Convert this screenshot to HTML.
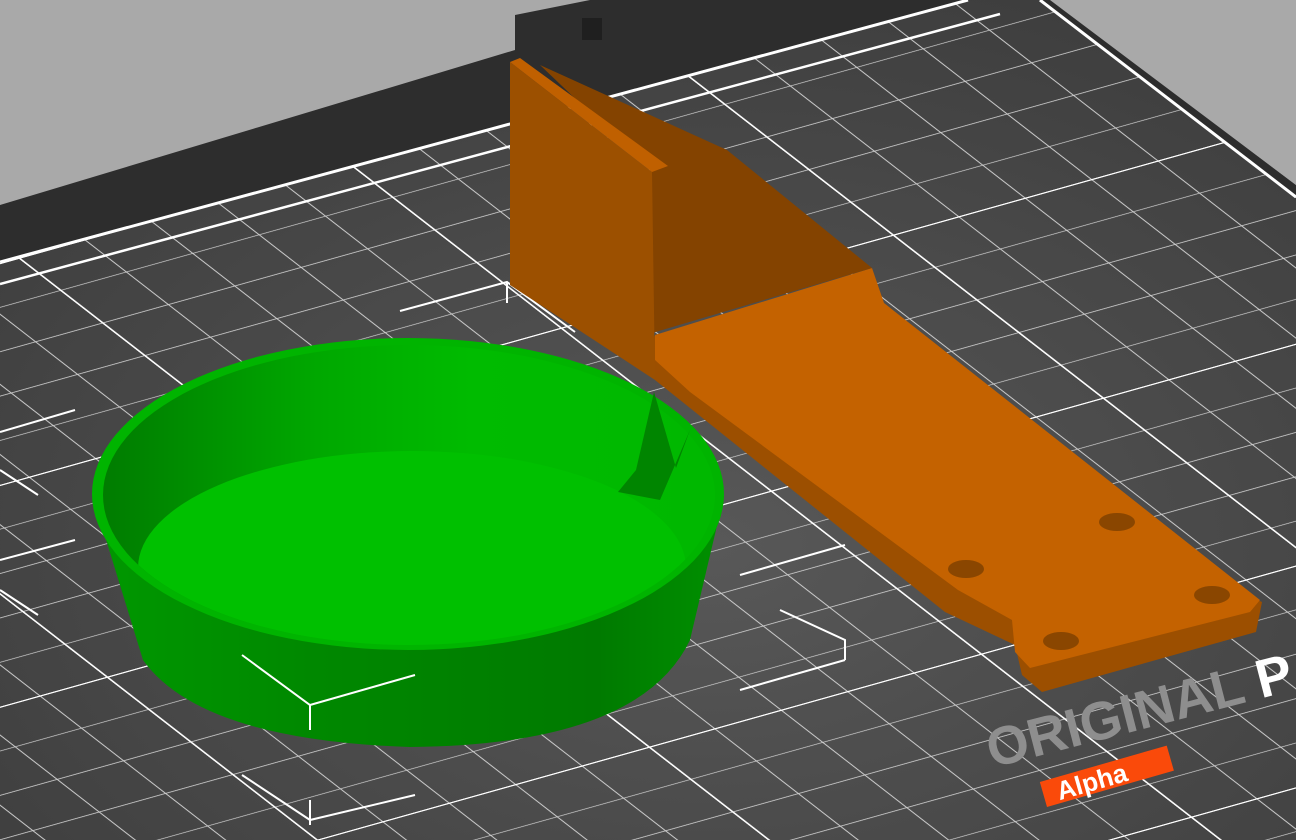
<!DOCTYPE html>
<html><head><meta charset="utf-8"><style>
html,body{margin:0;padding:0;width:1296px;height:840px;overflow:hidden;background:#a9a9a9}
svg{display:block}
</style></head><body>
<svg width="1296" height="840" viewBox="0 0 1296 840" xmlns="http://www.w3.org/2000/svg">
<defs>
<radialGradient id="pl" cx="0.55" cy="0.65" r="0.75">
<stop offset="0" stop-color="#585858"/><stop offset="1" stop-color="#3c3c3c"/>
</radialGradient>
<pattern id="minor" width="100" height="100" patternUnits="userSpaceOnUse" patternTransform="matrix(3.32,-0.93,2.1,1.63,892,235)">
<path d="M0 0H100M0 20H100M0 40H100M0 60H100M0 80H100M0 0V100M20 0V100M40 0V100M60 0V100M80 0V100" stroke="#d0d0d0" stroke-width="0.35" fill="none"/>
</pattern>
<pattern id="major" width="100" height="100" patternUnits="userSpaceOnUse" patternTransform="matrix(3.32,-0.93,2.1,1.63,892,235)">
<path d="M0 0H100M0 0V100" stroke="#fff" stroke-width="1.1" fill="none"/>
</pattern>
<linearGradient id="gb" x1="0" x2="1">
<stop offset="0" stop-color="#009800"/><stop offset="0.35" stop-color="#008800"/><stop offset="0.8" stop-color="#007a00"/><stop offset="1" stop-color="#009000"/>
</linearGradient>
<linearGradient id="gi" x1="0" x2="1">
<stop offset="0" stop-color="#007c00"/><stop offset="0.35" stop-color="#00a800"/><stop offset="0.6" stop-color="#00bb00"/><stop offset="1" stop-color="#00b800"/>
</linearGradient>
<clipPath id="cp"><polygon points="0,262 968,0 1040,0 1296,197 1296,840 0,840"/></clipPath>
<clipPath id="inner"><ellipse cx="409" cy="495" rx="306" ry="150"/></clipPath>
</defs>
<!-- dark bed -->
<polygon points="0,205 515,50 515,15 590,0 1050,0 1296,185 1296,210 0,270" fill="#2d2d2d"/>
<polygon points="1052,0 1296,0 1296,185" fill="#a9a9a9"/>
<rect x="582" y="18" width="20" height="22" fill="#1f1f1f"/>
<!-- plate -->
<polygon points="0,262 968,0 1040,0 1296,197 1296,840 0,840" fill="url(#pl)"/>
<g clip-path="url(#cp)">
<rect width="1296" height="840" fill="url(#minor)"/>
<rect width="1296" height="840" fill="url(#major)"/>
<polyline points="0,284 1000,14" stroke="#fff" stroke-width="2.5" fill="none"/>
</g>
<polyline points="0,262 968,0" stroke="#fff" stroke-width="3" fill="none"/>
<polyline points="1040,0 1296,197" stroke="#fff" stroke-width="3" fill="none"/>
<!-- bounding box markers -->
<g stroke="#fff" stroke-width="2" fill="none">
<path d="M400,311 L507,282 L575,332 M507,282 V303"/>
<path d="M0,432 L75,410 M0,470 L38,495 M0,560 L75,540 M0,590 L38,615"/>
<path d="M740,575 L845,545 M780,610 L845,640 V660 M740,690 L845,660"/>
<path d="M242,655 L310,705 L415,675 M310,705 V730"/>
<path d="M242,775 L310,820 L415,795 M310,800 V825"/>
</g>
<!-- logo -->
<text x="0" y="0" transform="translate(992,768) rotate(-14.5)" font-family="Liberation Sans, sans-serif" font-weight="bold" font-size="54" fill="#8e8e8e">ORIGINAL <tspan fill="#fff">P</tspan></text>
<g transform="translate(1047,807) rotate(-16)">
<rect x="0" y="-26" width="132" height="26" fill="#fa4a0a"/>
<text x="14" y="-3" font-family="Liberation Sans, sans-serif" font-weight="bold" font-size="26" fill="#fff">Alpha</text>
</g>
<!-- orange part -->
<polygon points="652,335 655,380 945,612 1015,645 1022,675 1042,692 1256,632 1262,602" fill="#9c4f00"/>
<polygon points="655,335 872,268 884,303 1260,600 1250,612 1030,668 1015,652 1012,620 958,590 690,392 655,360" fill="#c46200"/>
<polygon points="540,65 727,150 872,268 652,333 652,172" fill="#844300"/>
<polygon points="510,62 652,172 655,380 510,285" fill="#9c5000"/>
<polygon points="510,62 520,58 668,166 652,172" fill="#c06000"/>
<g fill="#8a4600">
<ellipse cx="1117" cy="522" rx="18" ry="9"/><ellipse cx="966" cy="569" rx="18" ry="9"/>
<ellipse cx="1212" cy="595" rx="18" ry="9"/><ellipse cx="1061" cy="641" rx="18" ry="9"/>
</g>
<!-- green bowl -->
<path d="M92,494 L143,660 Q200,740 410,747 Q640,745 690,640 L724,496 Z" fill="url(#gb)"/>
<ellipse cx="408" cy="494" rx="316" ry="156" fill="#00b400"/>
<ellipse cx="409" cy="495" rx="306" ry="150" fill="url(#gi)"/>
<ellipse cx="412" cy="568" rx="274" ry="117" fill="#00c000" clip-path="url(#inner)"/>
<polygon points="654,392 636,470 618,492 660,500 690,430 676,468" fill="#008500"/>
<g stroke="#fff" stroke-width="2" fill="none">
<path d="M242,655 L310,705 L415,675 M310,705 V730"/>
</g>
</svg>
</body></html>
